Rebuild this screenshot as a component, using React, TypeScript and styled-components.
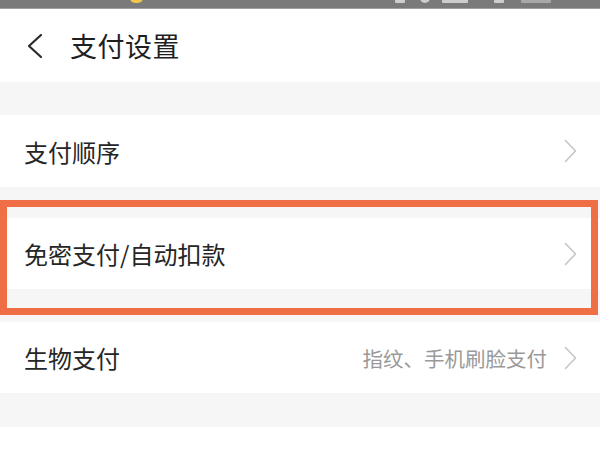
import styled, { createGlobalStyle } from 'styled-components';

const GlobalStyle = createGlobalStyle`
  html, body {
    margin: 0;
    padding: 0;
    background: #ffffff;
  }
  body {
    font-family: "Noto Sans CJK SC", "Noto Sans", "Liberation Sans", sans-serif;
    color: #333333;
  }
`;

const Page = styled.div`
  position: relative;
  width: 600px;
  height: 450px;
  overflow: hidden;
  background: #f6f6f6;
  display: flex;
  flex-direction: column;
`;

const StatusBar = styled.div`
  height: 9px;
  flex-shrink: 0;
  background: #7a7a7a;
  border-bottom: 1px solid #a0a0a0;
  box-sizing: border-box;
  overflow: hidden;
  display: flex;
  align-items: flex-end;
  padding-left: 130px;
`;

const StatusDot = styled.span<{ w: number; color?: string; ml?: number; round?: boolean }>`
  display: block;
  width: ${(p) => p.w}px;
  height: 10px;
  margin-bottom: 5px;
  margin-left: ${(p) => p.ml ?? 0}px;
  background: ${(p) => p.color ?? '#cdcdcd'};
  border-radius: ${(p) => (p.round ? '5px' : '1px')};
`;

const Header = styled.header`
  height: 73px;
  flex-shrink: 0;
  background: #ffffff;
  display: flex;
  align-items: center;
  padding-left: 26px;
  gap: 26px;
`;

const Title = styled.h1`
  margin: 0;
  font-size: 27px;
  font-weight: 400;
  color: #1f1f1f;
  letter-spacing: 0.5px;
`;

const Gap = styled.div<{ h: number }>`
  height: ${(p) => p.h}px;
  flex-shrink: 0;
  background: #f6f6f6;
`;

const Row = styled.div<{ h: number }>`
  height: ${(p) => p.h}px;
  flex-shrink: 0;
  background: #ffffff;
  display: flex;
  align-items: center;
  padding: 0 23px 0 24px;
`;

const Label = styled.span`
  flex: 1;
  font-size: 24px;
  color: #262626;
`;

const Hint = styled.span`
  font-size: 20.5px;
  color: #999999;
  margin-right: 17px;
`;

const Highlight = styled.div`
  position: absolute;
  left: 0;
  top: 200px;
  width: 598px;
  height: 115px;
  box-sizing: border-box;
  border: 7px solid #ef6e45;
  pointer-events: none;
`;

const BackIcon = () => (
  <svg width="18" height="26" viewBox="0 0 18 26" fill="none">
    <path d="M15 2 L3 13 L15 24" stroke="#2a2a2a" strokeWidth="2.2" strokeLinecap="round" strokeLinejoin="round" />
  </svg>
);

const Chevron = () => (
  <svg width="13" height="24" viewBox="0 0 13 24" fill="none">
    <path d="M1.5 1.5 L11.5 12 L1.5 22.5" stroke="#c6c6c6" strokeWidth="1.6" strokeLinecap="round" strokeLinejoin="round" />
  </svg>
);

const App = () => (
  <>
    <GlobalStyle />
    <Page>
      <StatusBar>
        <StatusDot w={13} color="#f3c64a" round />
        <StatusDot w={10} ml={252} />
        <StatusDot w={10} ml={15} round />
        <StatusDot w={26} ml={12} />
        <StatusDot w={10} ml={26} />
        <StatusDot w={30} ml={17} color="#a8a8a8" />
      </StatusBar>
      <Header>
        <BackIcon />
        <Title>支付设置</Title>
      </Header>
      <Gap h={33} />
      <Row h={72}>
        <Label>支付顺序</Label>
        <Chevron />
      </Row>
      <Gap h={31} />
      <Row h={71}>
        <Label>免密支付/自动扣款</Label>
        <Chevron />
      </Row>
      <Gap h={33} />
      <Row h={71}>
        <Label>生物支付</Label>
        <Hint>指纹、手机刷脸支付</Hint>
        <Chevron />
      </Row>
      <Gap h={34} />
      <Row h={60} />
      <Highlight />
    </Page>
  </>
);

export default App;
